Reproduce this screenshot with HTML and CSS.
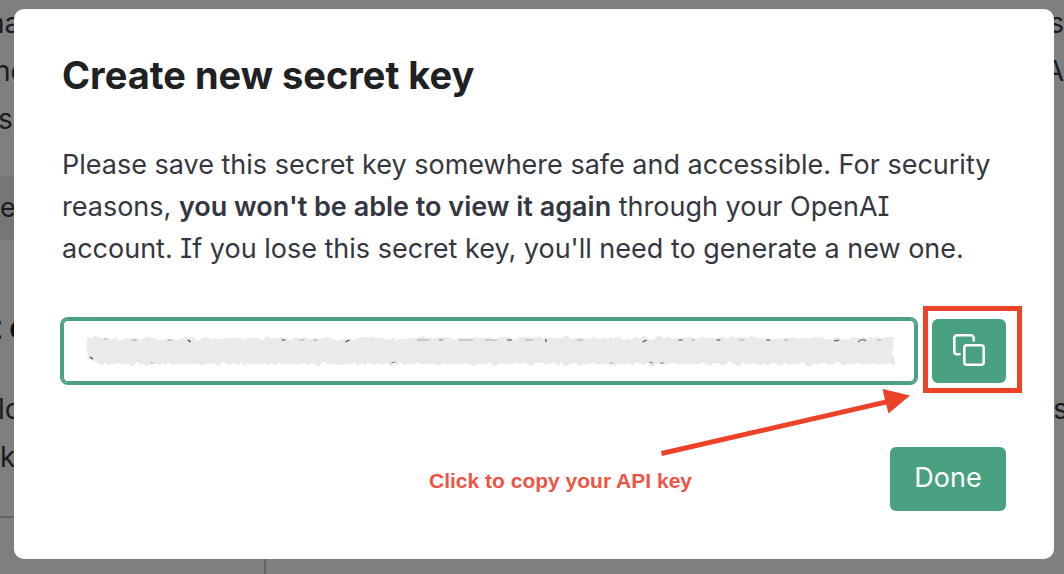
FILE: index.html
```html
<!DOCTYPE html>
<html lang="en">
<head>
<meta charset="utf-8">
<meta name="viewport" content="width=device-width, initial-scale=1">
<title>Create new secret key</title>
<link rel="stylesheet" href="styles.css">
</head>
<body>
<main class="page" aria-hidden="true">
  <div class="page-text">
    <p class="line"><span class="bleed">na</span><span>s</span></p>
    <p class="line"><span class="bleed-small">ne</span><span>A</span></p>
    <p class="line"><span class="bleed-tiny">s</span></p>
  </div>
  <div class="table-head"><span>e</span></div>
  <h2 class="page-heading"><span class="bleed-medium">t c</span></h2>
  <div class="page-text">
    <p class="line"><span class="bleed-tiny">lo</span><span class="bleed-right">s</span></p>
    <p class="line"><span>k</span></p>
  </div>
  <div class="page-table"><div class="page-cell"></div></div>
</main>
<div class="overlay">
  <section class="modal" role="dialog" aria-modal="true" aria-labelledby="title">
    <h1 class="title" id="title">Create new secret key</h1>
    <p class="message">Please save this secret key somewhere safe and accessible. For security reasons, <strong>you won't be able to view it again</strong> through your OpenAI account. If you lose this secret key, you'll need to generate a new one.</p>
    <div class="key-row">
      <div class="key-field">
        <input class="key-input" type="text" aria-label="Secret key" readonly>
        <svg class="redaction" viewBox="0 0 812 30" preserveAspectRatio="none" aria-hidden="true">
          <defs>
            <filter id="rough" x="-2%" y="-20%" width="104%" height="140%">
              <feTurbulence type="fractalNoise" baseFrequency="0.14" numOctaves="2" seed="8"/>
              <feDisplacementMap in="SourceGraphic" scale="8" xChannelSelector="R" yChannelSelector="G"/>
            </filter>
          </defs>
          <path d="M1 2H810V28H10L1 20Z" fill="#eaeaea" filter="url(#rough)"/>
          <g fill="none" stroke="#444" stroke-width="1.2">
            <path d="M4 21l3 2M102 4l3 2M196 4h4M260 6l4-2M422 4h5M461 3v3M558 6l4-2M594 4h4M632 4h4M682 4h4M750 5l5-1"/>
            <path d="M65 27h2M306 27l4-1M565 26l3 1M575 27h4M774 6q4-4 8-1M354 4h4" stroke="#777"/>
            <path d="M18 3h3M46 4h5M82 4h5M214 4h5M228 4h4M332 4h12M374 4h14M400 4h12M440 4h8M492 4h6M525 27h4M607 4h3M655 4h5M700 4h4M793 4h4" stroke="#aaa" stroke-width="1"/>
          </g>
        </svg>
      </div>
      <div class="copy-wrap">
        <button class="button copy" type="button" aria-label="Copy secret key">
          <svg class="copy-icon" viewBox="0 0 34 34" aria-hidden="true">
            <rect x="12.3" y="11.3" width="19.4" height="19.4" rx="2.5"/>
            <path d="M7.6 20.3H5a2.7 2.7 0 0 1-2.7-2.7V4A2.7 2.7 0 0 1 5 1.3H19A2.7 2.7 0 0 1 21.7 4V6.4"/>
          </svg>
        </button>
        <span class="highlight"></span>
        <svg class="arrow" viewBox="0 0 252 70" aria-hidden="true">
          <path d="M1 62L225 10.8L222.5 0L250 6.5L228.5 24.5L226.2 15.5L2 67Z"/>
        </svg>
      </div>
    </div>
    <div class="actions">
      <p class="hint">Click to copy your API key</p>
      <button class="button done" type="button">Done</button>
    </div>
  </section>
</div>
</body>
</html>
```
FILE: styles.css
```css
* { box-sizing: border-box; }

body {
  margin: 0;
  min-height: 100vh;
  overflow: hidden;
  background: #fff;
  color: #353740;
  font-family: Inter, "Liberation Sans", sans-serif;
  font-size: 27px;
  font-feature-settings: "cv08";
}

h1, h2, p { margin: 0; }

.page {
  position: fixed;
  inset: 0;
  overflow: hidden;
  background: #fff;
}

.page-text { font-size: 28px; line-height: 46px; padding-bottom: 4px; }
.line { display: flex; justify-content: space-between; margin-bottom: 2px; }
.bleed { margin-left: -12px; }
.bleed-medium { margin-left: -10px; }
.bleed-small { margin-left: -6px; }
.bleed-tiny { margin-left: -2px; }
.bleed-right { margin-right: -4px; }

.table-head {
  height: 64px;
  margin: 28px 24px 56px 0;
  background: #ececf1;
  line-height: 64px;
}

.page-heading {
  margin-bottom: 26px;
  color: #202123;
  font-size: 32px;
  line-height: 64px;
}

.page-table {
  display: flex;
  height: 96px;
  margin: 30px 24px 0 0;
  border-top: 2px solid #c5c5d2;
}

.page-cell { width: 266px; border-right: 2px solid #c5c5d2; }

.overlay {
  position: fixed;
  inset: 0;
  padding: 9px 10px 15px 14px;
  background: rgba(0, 0, 0, 0.5);
}

.modal {
  padding: 46px 48px 48px;
  border-radius: 10px;
  background: #fff;
}

.title {
  margin-bottom: 49px;
  color: #202123;
  font-size: 38px;
  font-weight: 650;
  line-height: 40px;
}

.message { margin-bottom: 49px; line-height: 42px; }
.message strong { font-weight: 600; }

.key-row { display: flex; gap: 16px; margin-bottom: 64px; }
.key-field { position: relative; flex: 1; }

.key-input {
  display: block;
  width: 100%;
  height: 64px;
  padding: 0 24px;
  border: 2px solid #4aa181;
  border-radius: 6px;
  outline: 2px solid #4aa181;
  background: #fff;
  color: #353740;
  font: inherit;
}

.redaction {
  position: absolute;
  top: 17px;
  left: 24px;
  width: calc(100% - 44px);
  height: 30px;
  overflow: visible;
}

.button {
  height: 64px;
  border: 0;
  border-radius: 6px;
  background: #4aa181;
  color: #fff;
  font: inherit;
}

.copy-wrap { position: relative; }

.copy {
  display: flex;
  align-items: center;
  justify-content: center;
  width: 74px;
}

.copy-icon {
  width: 34px;
  height: 34px;
  flex: none;
  fill: none;
  stroke: #fff;
  stroke-width: 2.6;
  stroke-linecap: round;
}

.highlight {
  position: absolute;
  inset: -13px -16px -10px -9px;
  border: 5px solid #ec4227;
  pointer-events: none;
}

.arrow {
  position: absolute;
  top: 70px;
  right: 94px;
  width: 252px;
  height: 70px;
  fill: #ec4227;
  pointer-events: none;
}

.actions { display: flex; align-items: center; gap: 24px; }

.hint {
  flex: 1;
  padding-top: 4px;
  padding-right: 174px;
  color: #ec5545;
  font: bold 21px/24px "Liberation Sans", Arial, sans-serif;
  text-align: right;
}

.done { width: 116px; padding-bottom: 4px; }
```
